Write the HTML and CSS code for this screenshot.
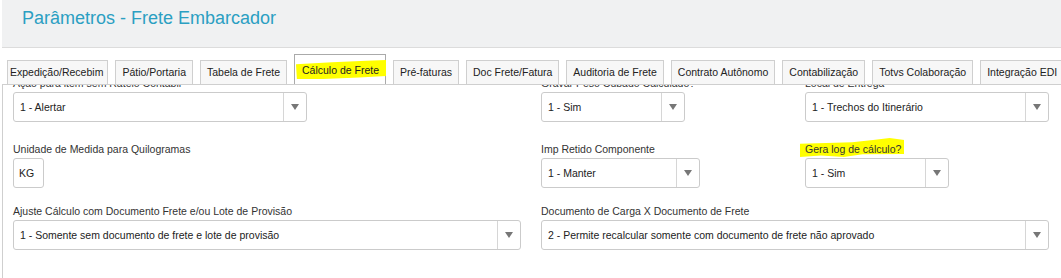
FILE: index.html
```html
<!DOCTYPE html>
<html lang="pt-BR">
<head>
    <meta charset="UTF-8">
    <meta name="viewport" content="width=device-width, initial-scale=1.0">
    <title>Parâmetros - Frete Embarcador</title>
    <link rel="stylesheet" href="styles.css">
</head>

<body>
    <div class="page-header">
        <h1>Parâmetros - Frete Embarcador</h1>
    </div>

    <div class="tab-bar">
        <div class="tab tab-first">Expedição/Recebim</div>
        <div class="tab">Pátio/Portaria</div>
        <div class="tab">Tabela de Frete</div>
        <div class="tab active"><span class="marker">Cálculo de Frete</span></div>
        <div class="tab">Pré-faturas</div>
        <div class="tab">Doc Frete/Fatura</div>
        <div class="tab">Auditoria de Frete</div>
        <div class="tab">Contrato Autônomo</div>
        <div class="tab">Contabilização</div>
        <div class="tab">Totvs Colaboração</div>
        <div class="tab">Integração EDI</div>
    </div>

    <div class="tab-panel">
        <div class="form">
            <div class="form-row row-1">
                <div class="field span-2">
                    <label>Ação para item sem Rateio Contábil</label>
                    <div class="select w-294">
                        <span class="select-value">1 - Alertar</span>
                        <span class="select-arrow"><svg width="8" height="6" viewBox="0 0 8 6"><polygon points="0,0 8,0 4,6" /></svg></span>
                    </div>
                </div>
                <div class="field">
                    <label>Gravar Peso Cubado Calculado?</label>
                    <div class="select w-144">
                        <span class="select-value">1 - Sim</span>
                        <span class="select-arrow"><svg width="8" height="6" viewBox="0 0 8 6"><polygon points="0,0 8,0 4,6" /></svg></span>
                    </div>
                </div>
                <div class="field">
                    <label>Local de Entrega</label>
                    <div class="select">
                        <span class="select-value">1 - Trechos do Itinerário</span>
                        <span class="select-arrow"><svg width="8" height="6" viewBox="0 0 8 6"><polygon points="0,0 8,0 4,6" /></svg></span>
                    </div>
                </div>
            </div>

            <div class="form-row row-2">
                <div class="field">
                    <label>Unidade de Medida para Quilogramas</label>
                    <div class="input w-31">KG</div>
                </div>
                <div class="field col-3">
                    <label>Imp Retido Componente</label>
                    <div class="select w-159">
                        <span class="select-value">1 - Manter</span>
                        <span class="select-arrow"><svg width="8" height="6" viewBox="0 0 8 6"><polygon points="0,0 8,0 4,6" /></svg></span>
                    </div>
                </div>
                <div class="field">
                    <label><span class="marker marker-label">Gera log de cálculo?</span></label>
                    <div class="select w-144">
                        <span class="select-value">1 - Sim</span>
                        <span class="select-arrow"><svg width="8" height="6" viewBox="0 0 8 6"><polygon points="0,0 8,0 4,6" /></svg></span>
                    </div>
                </div>
            </div>

            <div class="form-row">
                <div class="field span-2">
                    <label>Ajuste Cálculo com Documento Frete e/ou Lote de Provisão</label>
                    <div class="select">
                        <span class="select-value">1 - Somente sem documento de frete e lote de provisão</span>
                        <span class="select-arrow"><svg width="8" height="6" viewBox="0 0 8 6"><polygon points="0,0 8,0 4,6" /></svg></span>
                    </div>
                </div>
                <div class="field span-2">
                    <label>Documento de Carga X Documento de Frete</label>
                    <div class="select">
                        <span class="select-value">2 - Permite recalcular somente com documento de frete não aprovado</span>
                        <span class="select-arrow"><svg width="8" height="6" viewBox="0 0 8 6"><polygon points="0,0 8,0 4,6" /></svg></span>
                    </div>
                </div>
            </div>
        </div>
    </div>
</body>

</html>
```

FILE: styles.css
```css
body {
    font-family: "Liberation Sans", Arial, sans-serif;
    font-size: 10.5px;
    color: #333;
    background-color: #fff;
    margin: 0;
    padding: 0 0 0 2px;
    height: 278px;
    overflow: hidden;
}

.page-header {
    background-color: #f0f1f2;
    border-bottom: 1px solid #dcdcdc;
    height: 48px;
    box-sizing: border-box;
    padding: 5px 0 0 20px;
}

.page-header h1 {
    margin: 0;
    font-size: 18px;
    font-weight: normal;
    line-height: 26px;
    color: #2b9fc2;
}

/* tabs */
.tab-bar {
    display: flex;
    align-items: flex-end;
    gap: 7px;
    height: 36px;
    padding-left: 5px;
    border-bottom: 1px solid #cfcfcf;
    white-space: nowrap;
    overflow: hidden;
}

.tab {
    flex-shrink: 0;
    height: 24px;
    box-sizing: border-box;
    padding: 0 6px;
    line-height: 22px;
    background-color: #f7f7f7;
    border: 1px solid #cfcfcf;
    border-bottom: none;
    color: #222;
}

.tab-first {
    padding: 0 4px 0 2px;
}

.tab.active {
    height: 31px;
    margin-bottom: -1px;
    background-color: #fff;
    border-color: #aaa;
    line-height: 30px;
    padding: 0 6px 0 7px;
}

.marker {
    position: relative;
    z-index: 0;
}

.marker::before {
    content: "";
    position: absolute;
    z-index: -1;
    left: -6px;
    right: -7px;
    top: -4px;
    bottom: -3px;
    background-color: #ffff00;
    clip-path: polygon(0 22%, 40% 12%, 78% 4%, 100% 0, 100% 84%, 70% 92%, 30% 100%, 1% 100%);
}

.marker-label::before {
    left: -5px;
    right: -3px;
    top: -5px;
    bottom: -2px;
    clip-path: polygon(0 30%, 50% 22%, 70% 10%, 86% 0, 100% 10%, 100% 84%, 60% 86%, 42% 100%, 20% 92%, 0 100%);
}

/* panel */
.tab-panel {
    border-left: 1px solid #cfcfcf;
    height: 193px;
    overflow: hidden;
    padding-left: 10px;
}

.form {
    margin-top: -9px;
}

.form-row {
    display: grid;
    grid-template-columns: repeat(4, 244px);
    column-gap: 20px;
    margin-bottom: 18px;
}

.row-1 {
    margin-bottom: 20px;
}

.row-2 {
    margin-bottom: 16px;
}

.span-2 {
    grid-column: span 2;
}

.col-3 {
    grid-column: 3;
}

.field label {
    display: block;
    line-height: 15px;
    margin-bottom: 1px;
    white-space: nowrap;
}

.select,
.input {
    display: flex;
    align-items: center;
    height: 30px;
    box-sizing: border-box;
    border: 1px solid #cbcbcb;
    border-radius: 3px;
    background-color: #fff;
    color: #222;
}

.input {
    padding-left: 5px;
}

.select-value {
    flex: 1;
    padding-left: 6px;
    white-space: nowrap;
    overflow: hidden;
}

.select-arrow {
    width: 22px;
    height: 100%;
    border-left: 1px solid #d6d6d6;
    display: flex;
    align-items: center;
    justify-content: center;
}

.select-arrow svg {
    fill: #777;
}

.w-294 {
    width: 294px;
}

.w-144 {
    width: 144px;
}

.w-159 {
    width: 159px;
}

.w-31 {
    width: 31px;
}
```
